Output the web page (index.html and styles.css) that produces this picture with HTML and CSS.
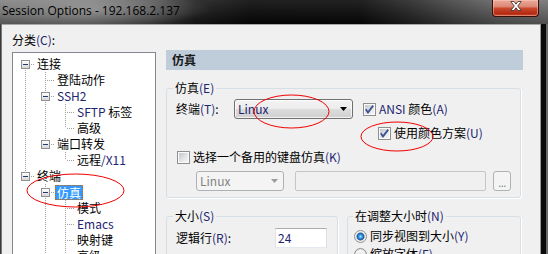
FILE: index.html
```html
<!DOCTYPE html>
<html>
<head>
<meta charset="utf-8">
<link rel="stylesheet" href="styles.css">
</head>
<body>
<div class="window">
  <div class="titlebar">
    <span class="title">Session Options - 192.168.2.137</span>
    <div class="close">
      <svg width="12" height="10" viewBox="0 0 12 10"><path d="M0.8 0.5H4L6 3.2L8 0.5H11.2L7.7 5L11.2 9.5H8L6 6.8L4 9.5H0.8L4.3 5Z" fill="#fff" stroke="#4a3a36" stroke-width="0.9" stroke-linejoin="round"/></svg>
    </div>
  </div>
  <div class="frame">
    <div class="lframe"></div>
    <div class="client">
      <div class="left">
        <div class="cat-label">分类<span class="k">(C)</span>:</div>
        <div class="tree">
          <div class="row"><span class="c first"><i class="exp"></i></span><span class="lbl">连接</span></div>
          <div class="row"><span class="c v"></span><span class="c tee"></span><span class="lbl">登陆动作</span></div>
          <div class="row"><span class="c v"></span><span class="c tee"><i class="exp"></i></span><span class="lbl k">SSH2</span></div>
          <div class="row"><span class="c v"></span><span class="c v"></span><span class="c tee"></span><span class="lbl"><span class="k">SFTP</span> 标签</span></div>
          <div class="row"><span class="c v"></span><span class="c v"></span><span class="c ell"></span><span class="lbl">高级</span></div>
          <div class="row"><span class="c v"></span><span class="c ell"><i class="exp"></i></span><span class="lbl">端口转发</span></div>
          <div class="row"><span class="c v"></span><span class="c"></span><span class="c ell"></span><span class="lbl">远程<span class="k">/X11</span></span></div>
          <div class="row"><span class="c ell"><i class="exp"></i></span><span class="lbl">终端</span></div>
          <div class="row"><span class="c"></span><span class="c tee"><i class="exp"></i></span><span class="lbl sel">仿真</span></div>
          <div class="row"><span class="c"></span><span class="c v"></span><span class="c tee"></span><span class="lbl">模式</span></div>
          <div class="row"><span class="c"></span><span class="c v"></span><span class="c tee"></span><span class="lbl k">Emacs</span></div>
          <div class="row"><span class="c"></span><span class="c v"></span><span class="c tee"></span><span class="lbl">映射键</span></div>
          <div class="row"><span class="c"></span><span class="c v"></span><span class="c ell"></span><span class="lbl">高级</span></div>
        </div>
      </div>
      <div class="right">
        <div class="header">仿真</div>
        <fieldset class="group emu">
          <legend>仿真<span class="k">(E)</span></legend>
          <div class="row1">
            <span class="lab1">终端<span class="k">(T)</span>:</span>
            <div class="combo"><span class="k">Linux</span><svg width="7" height="4" viewBox="0 0 7 4"><path d="M0 0H7L3.5 4Z" fill="#000"/></svg></div>
            <div class="chk ansi"><span class="cb"><svg width="9" height="9" viewBox="0 0 9 9"><path d="M0.8 4.2L3 7.4L8.2 0.6" fill="none" stroke="#3d5191" stroke-width="1.8"/></svg></span><span><span class="k">ANSI</span> 颜色<span class="k">(A)</span></span></div>
          </div>
          <div class="row2">
            <div class="chk"><span class="cb"><svg width="9" height="9" viewBox="0 0 9 9"><path d="M0.8 4.2L3 7.4L8.2 0.6" fill="none" stroke="#3d5191" stroke-width="1.8"/></svg></span><span>使用颜色方案<span class="k">(U)</span></span></div>
          </div>
          <div class="row3">
            <div class="chk"><span class="cb"></span><span>选择一个备用的键盘仿真<span class="k">(K)</span></span></div>
          </div>
          <div class="row4">
            <div class="combo dis"><span>Linux</span><svg width="7" height="4" viewBox="0 0 7 4"><path d="M0 0H7L3.5 4Z" fill="#9c9c9c"/></svg></div>
            <div class="edit dis"></div>
            <div class="btn dis">...</div>
          </div>
        </fieldset>
        <div class="lower">
          <fieldset class="group size">
            <legend>大小<span class="k">(S)</span></legend>
            <div class="frow">
              <span class="lab2">逻辑行<span class="k">(R)</span>:</span>
              <div class="edit"><span class="k">24</span></div>
            </div>
          </fieldset>
          <fieldset class="group resize">
            <legend>在调整大小时<span class="k">(N)</span></legend>
            <div class="rrow"><span class="rd on"></span><span>同步视图到大小<span class="k">(Y)</span></span></div>
            <div class="rrow second"><span class="rd"></span><span>缩放字体<span class="k">(F)</span></span></div>
          </fieldset>
        </div>
      </div>
    </div>
    <div class="rframe"></div>
  </div>
  <svg class="marks" width="548" height="254" viewBox="0 0 548 254">
    <ellipse cx="291.5" cy="111.5" rx="37.5" ry="16.5" fill="none" stroke="#f00000" stroke-width="1"/>
    <ellipse cx="397" cy="136.5" rx="36" ry="14.5" fill="none" stroke="#f00000" stroke-width="1"/>
    <ellipse cx="75.5" cy="190.5" rx="48.5" ry="16.5" fill="none" stroke="#f00000" stroke-width="1"/>
  </svg>
</div>
</body>
</html>
```
FILE: styles.css
```css
* { box-sizing: border-box; }
html, body { margin: 0; padding: 0; }
body {
  background: #000;
  width: 548px;
  height: 254px;
  overflow: hidden;
  font-family: "Noto Sans CJK SC", "Noto Sans", sans-serif;
  font-size: 12px;
  line-height: 16px;
  color: #000;
}
.k { color: #1c2470; }

.window {
  position: relative;
  width: 548px;
  height: 254px;
  overflow: hidden;
  display: flex;
  flex-direction: column;
  background: #2a2a2a;
}

.titlebar {
  height: 24px;
  flex: none;
  display: flex;
  justify-content: space-between;
  align-items: flex-start;
  background:
    radial-gradient(ellipse 120px 18px at 92px 9px, rgba(190,190,190,.45), rgba(190,190,190,0) 100%),
    linear-gradient(180deg, rgba(255,255,255,.10), rgba(0,0,0,.30)),
    linear-gradient(90deg, #7e7e7e 0, #737373 90px, #4c4c4c 150px, #1c1c1c 195px, #080808 250px, #090909 360px, #262626 410px, #4a4a4a 460px, #646464 500px, #727272 548px);
}
.title {
  font-family: "Open Sans", "Noto Sans", sans-serif;
  font-size: 12px;
  line-height: 16px;
  padding: 3px 0 0 2px;
  color: #000;
  white-space: nowrap;
}
.close {
  width: 47px;
  height: 17px;
  margin-right: 9px;
  border: 1px solid #3b0f06;
  border-top: 0;
  border-radius: 0 0 4px 4px;
  background: linear-gradient(#eaa99a 0, #dd8a78 40%, #c9492d 52%, #b42a12 85%, #c84b2c 100%);
  box-shadow: inset 0 0 0 1px rgba(255,210,200,.45);
  display: flex;
  justify-content: center;
  align-items: flex-start;
  padding-top: 1px;
}
.close svg { display: block; }

.frame { flex: 1; display: flex; min-height: 0; }
.lframe { width: 2px; flex: none; background: linear-gradient(90deg, #3a3a3a 0 1px, #7a7a7a 1px); }
.client {
  width: 539px;
  flex: none;
  background: #f0f0f0;
  border-top: 1px solid #a8a8a8;
  border-right: 1px solid #9a9a9a;
  display: grid;
  grid-template-columns: 144px 357px;
  column-gap: 10px;
  align-items: start;
  padding: 7px 0 0 10px;
}
.rframe { flex: 1; background: linear-gradient(90deg, #0a0a0a 0 5px, #6a6a6a 5px); }

/* left tree */
.left { display: flex; flex-direction: column; }
.cat-label { height: 16px; }
.tree {
  margin-top: 4px;
  height: 260px;
  background: #fff;
  border: 1px solid #828790;
  padding: 3px 0 0 2px;
}
.row { display: flex; height: 16px; }
.c { width: 20px; height: 16px; flex: none; display: block; }
.c.v {
  background: repeating-linear-gradient(180deg, #a0a0a0 0 1px, transparent 1px 2px) 10px 0 / 1px 16px no-repeat;
}
.c.tee {
  background:
    repeating-linear-gradient(180deg, #a0a0a0 0 1px, transparent 1px 2px) 10px 0 / 1px 16px no-repeat,
    repeating-linear-gradient(90deg, #a0a0a0 0 1px, transparent 1px 2px) 12px 8px / 8px 1px no-repeat;
}
.c.ell {
  background:
    repeating-linear-gradient(180deg, #a0a0a0 0 1px, transparent 1px 2px) 10px 0 / 1px 8px no-repeat,
    repeating-linear-gradient(90deg, #a0a0a0 0 1px, transparent 1px 2px) 12px 8px / 8px 1px no-repeat;
}
.c.first {
  background:
    repeating-linear-gradient(180deg, #a0a0a0 0 1px, transparent 1px 2px) 10px 8px / 1px 8px no-repeat,
    repeating-linear-gradient(90deg, #a0a0a0 0 1px, transparent 1px 2px) 12px 8px / 8px 1px no-repeat;
}
.exp {
  display: block;
  width: 9px;
  height: 9px;
  margin: 4px 0 0 6px;
  border: 1px solid #919191;
  background:
    linear-gradient(#23396b, #23396b) center / 5px 1px no-repeat,
    linear-gradient(#ffffff, #d6d6d6);
}
.lbl { height: 16px; padding: 0 2px; white-space: nowrap; }
.lbl.sel {
  height: 15px;
  line-height: 15px;
  margin-top: 1px;
  background: #3399ff;
  color: #fff;
  outline: 1px dotted #cc6600;
  outline-offset: -1px;
}

/* right panel */
.right { margin-top: 18px; display: flex; flex-direction: column; }
.header {
  height: 20px;
  line-height: 20px;
  background: #bfcddb;
  padding-left: 6px;
  font-weight: bold;
  color: #1a1a1a;
}
.group {
  margin: 0;
  min-width: 0;
  border: 1px solid #d5dfe5;
  border-radius: 3px;
  box-shadow: 1px 1px 0 #fff;
}
.group legend { padding: 0 2px; line-height: 16px; }
.emu { width: 355px; margin-top: 10px; padding: 3px 0 6px 9px; }
.emu legend { margin-left: -3px; }

.row1 { display: flex; align-items: center; height: 20px; }
.lab1 { width: 58px; flex: none; }
.combo {
  width: 119px;
  height: 20px;
  flex: none;
  border: 1px solid #707070;
  border-radius: 3px;
  background: linear-gradient(#f3f3f3 0%, #ececec 48%, #dddddd 50%, #cfcfcf 100%);
  box-shadow: inset 0 0 0 1px rgba(255,255,255,.75);
  display: flex;
  align-items: center;
  justify-content: space-between;
  padding: 0 5px 0 3px;
}
.combo svg { display: block; }
.combo.dis {
  width: 88px;
  border-color: #adb2b5;
  background: #f4f4f4;
  box-shadow: none;
  color: #838383;
}
.chk { display: flex; align-items: center; gap: 3px; white-space: nowrap; }
.ansi { margin-left: 10px; }
.cb {
  width: 13px;
  height: 13px;
  flex: none;
  display: block;
  border: 1px solid #8e8f8f;
  padding: 1px;
  background:
    linear-gradient(135deg, #c3c7cc 0%, #e6e7e9 60%, #f5f5f5 100%) content-box,
    #fbfbfb;
}
.cb svg { display: block; overflow: visible; }
.row2 { margin-top: 6px; height: 16px; padding-left: 202px; display: flex; align-items: center; }
.row3 { margin-top: 8px; height: 16px; padding-left: 1px; display: flex; align-items: center; }
.row4 { margin-top: 6px; height: 20px; padding-left: 20px; display: flex; }
.edit {
  height: 20px;
  border: 1px solid;
  border-color: #abadb3 #dbdfe6 #e3e9ef #e2e3ea;
  background: #fff;
  padding-left: 2px;
  line-height: 18px;
}
.edit.dis { width: 191px; margin-left: 11px; background: #f0f0f0; border-color: #c5c5c5; border-radius: 2px; }
.btn.dis {
  width: 18px;
  height: 20px;
  margin-left: 7px;
  border: 1px solid #adb2b5;
  border-radius: 3px;
  background: #f4f4f4;
  color: #8a8a8a;
  text-align: center;
  line-height: 20px;
  font-size: 11px;
  letter-spacing: -0.5px;
}

.lower { margin-top: 10px; display: flex; gap: 9px; }
.size { width: 172px; padding: 4px 0 12px 9px; }
.size legend { margin-left: -3px; }
.resize { width: 174px; padding: 4px 0 12px 6px; }
.resize legend { margin-left: -1px; }
.frow { display: flex; align-items: center; height: 20px; }
.lab2 { width: 99px; flex: none; }
.frow .edit { width: 52px; }
.rrow { display: flex; align-items: center; gap: 3px; height: 16px; white-space: nowrap; }
.rrow.second { margin-top: 2px; }
.rd {
  width: 13px;
  height: 13px;
  flex: none;
  border-radius: 50%;
  border: 1px solid #8e8f8f;
  background: radial-gradient(circle, #e9e9e9 0, #f4f4f4 4px, #dcdcdc 5.5px);
}
.rd.on {
  background: radial-gradient(circle, #b8e4ff 0, #3c9de6 1.6px, #1a5ca6 3.4px, #7d93ad 3.9px, #e4e4e4 4.3px, #f6f6f6 5.5px);
}

.marks { position: absolute; top: 0; left: 0; pointer-events: none; }
```
